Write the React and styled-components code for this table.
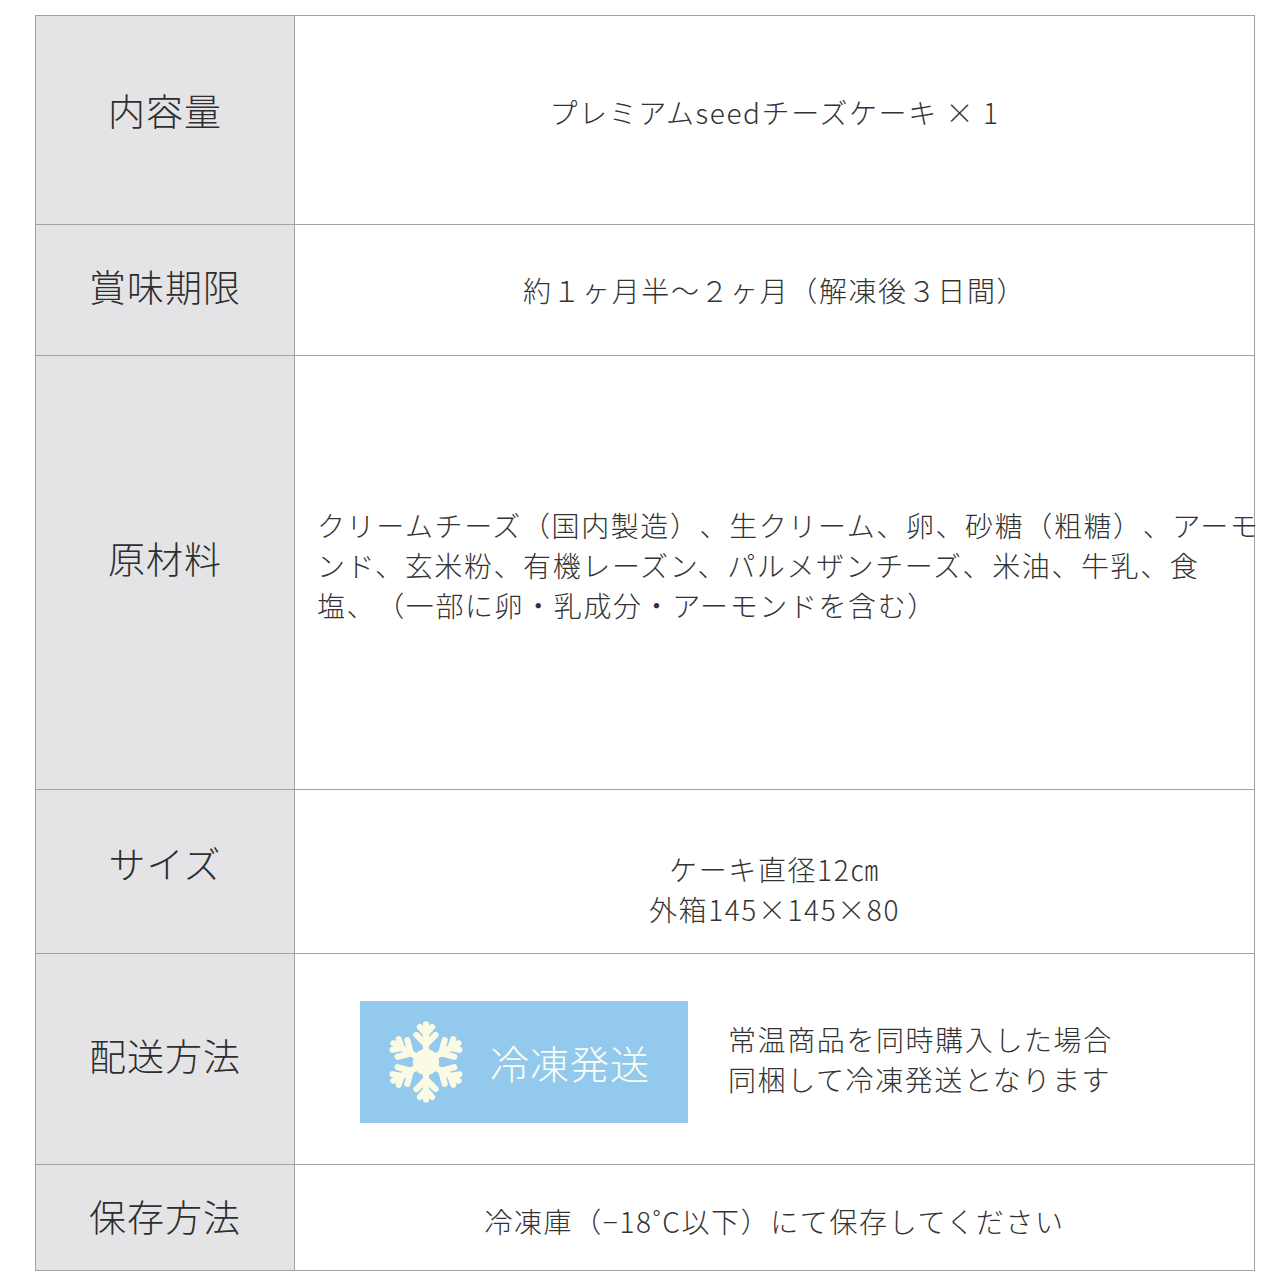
import React from "react";
import styled, { createGlobalStyle } from "styled-components";

const GlobalStyle = createGlobalStyle`
  body {
    margin: 0;
    background: #ffffff;
    font-family: "Noto Sans CJK JP", "Noto Sans", sans-serif;
    color: #333;
    text-spacing-trim: space-all;
  }
`;

const Page = styled.div`
  padding: 15px 25px 10px 35px;
`;

const Table = styled.table`
  width: 1220px;
  border-collapse: collapse;
  table-layout: fixed;
`;

const Row = styled.tr`
  height: ${(p) => p.$h}px;
`;

const Head = styled.th`
  width: 258px;
  background: #e4e4e6;
  border: 1px solid #a3a3a3;
  font-size: 37px;
  font-weight: 300;
  letter-spacing: 1px;
  color: #2e2e2e;
  text-align: center;
  vertical-align: middle;
  padding: 0 0 ${(p) => p.$lift || 0}px;
`;

const Cell = styled.td`
  border: 1px solid #a3a3a3;
  font-size: 28px;
  font-weight: 300;
  letter-spacing: 1.6px;
  line-height: 40px;
  color: #333;
  text-align: ${(p) => (p.$left ? "left" : "center")};
  vertical-align: middle;
  padding: ${(p) => p.$pad || "0"};
  overflow: visible;
`;

const Line = styled.div`
  white-space: nowrap;
`;

const ShipWrap = styled.div`
  display: flex;
  align-items: center;
  gap: 40px;
  padding: 6px 0 0 65px;
`;

const Badge = styled.div`
  width: 328px;
  height: 122px;
  background: #93c9ec;
  display: flex;
  align-items: center;
  gap: 22px;
  padding-left: 24px;
  box-sizing: border-box;
`;

const BadgeText = styled.span`
  color: #fbfdf6;
  font-size: 39px;
  font-weight: 300;
  letter-spacing: 1px;
`;

const ShipNote = styled.div`
  text-align: left;
  line-height: 40px;
  padding-bottom: 6px;
`;

function Snowflake() {
  const arm = (
    <g stroke="#fbfbe4" strokeWidth="7" strokeLinecap="round" fill="none">
      <path d="M0 0 L0 -43" />
      <path d="M0 -20 L-11 -31 M0 -20 L11 -31" />
      <path d="M0 -32 L-7 -40 M0 -32 L7 -40" />
    </g>
  );
  return (
    <svg width="84" height="92" viewBox="-48 -50 96 100">
      {[0, 60, 120, 180, 240, 300].map((a) => (
        <g key={a} transform={`rotate(${a})`}>
          {arm}
        </g>
      ))}
      <circle r="15" fill="#fbfbe4" />
    </svg>
  );
}

export default function App() {
  return (
    <>
      <GlobalStyle />
      <Page>
        <Table>
          <tbody>
            <Row $h={209}>
              <Head $lift={20}>内容量</Head>
              <Cell $pad="0 0 16px">プレミアムseedチーズケーキ × 1</Cell>
            </Row>
            <Row $h={131}>
              <Head $lift={8}>賞味期限</Head>
              <Cell>約１ヶ月半〜２ヶ月（解凍後３日間）</Cell>
            </Row>
            <Row $h={434}>
              <Head $lift={30}>原材料</Head>
              <Cell $left $pad="0 0 16px 22px">
                <Line>クリームチーズ（国内製造）、生クリーム、卵、砂糖（粗糖）、アーモ</Line>
                <Line>ンド、玄米粉、有機レーズン、パルメザンチーズ、米油、牛乳、食</Line>
                <Line>塩、（一部に卵・乳成分・アーモンドを含む）</Line>
              </Cell>
            </Row>
            <Row $h={164}>
              <Head $lift={18}>サイズ</Head>
              <Cell $pad="34px 0 0">
                <Line>ケーキ直径12㎝</Line>
                <Line>外箱145×145×80</Line>
              </Cell>
            </Row>
            <Row $h={211}>
              <Head $lift={8}>配送方法</Head>
              <Cell $left>
                <ShipWrap>
                  <Badge>
                    <Snowflake />
                    <BadgeText>冷凍発送</BadgeText>
                  </Badge>
                  <ShipNote>
                    <Line>常温商品を同時購入した場合</Line>
                    <Line>同梱して冷凍発送となります</Line>
                  </ShipNote>
                </ShipWrap>
              </Cell>
            </Row>
            <Row $h={106}>
              <Head $lift={4}>保存方法</Head>
              <Cell $pad="6px 0 0">冷凍庫（−18˚C以下）にて保存してください</Cell>
            </Row>
          </tbody>
        </Table>
      </Page>
    </>
  );
}
